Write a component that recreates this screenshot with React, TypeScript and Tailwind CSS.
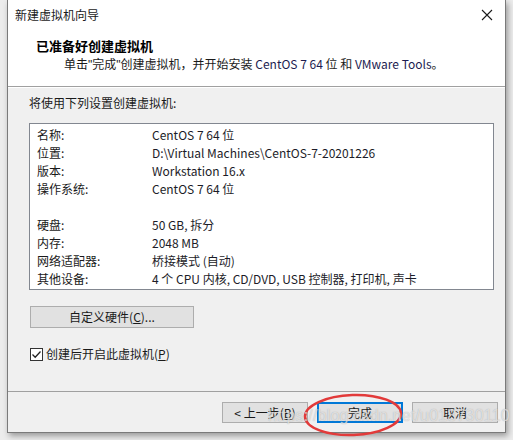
import React from 'react';

const rows: [string, string][] = [
  ['名称:', 'CentOS 7 64 位'],
  ['位置:', 'D:\\Virtual Machines\\CentOS-7-20201226'],
  ['版本:', 'Workstation 16.x'],
  ['操作系统:', 'CentOS 7 64 位'],
  ['', ''],
  ['硬盘:', '50 GB, 拆分'],
  ['内存:', '2048 MB'],
  ['网络适配器:', '桥接模式 (自动)'],
  ['其他设备:', '4 个 CPU 内核, CD/DVD, USB 控制器, 打印机, 声卡'],
];

const font = { fontFamily: '"Noto Sans CJK SC", "Noto Sans", sans-serif' };
const latin = { fontFamily: '"Liberation Sans", Arial, sans-serif' };

export default function App() {
  return (
    <div className="relative w-[513px] h-[440px] overflow-hidden bg-[#ececec] text-[12px] text-[#1a1a1a]" style={font}>
      <div className="ml-[7px] w-[499px] h-[433px] flex flex-col border border-t-0 border-[#7a7a7a] bg-[#f0f0f0] shadow-[2px_3px_6px_rgba(0,0,0,0.35)]">
        {/* title bar */}
        <div className="h-[30px] bg-white flex items-center justify-between pl-[7px] pr-[10px]">
          <span className="leading-none">新建虚拟机向导</span>
          <svg width="12" height="12" viewBox="0 0 12 12" className="mr-[2px]">
            <path d="M1 1L11 11M11 1L1 11" stroke="#1a1a1a" strokeWidth="1.1" />
          </svg>
        </div>

        {/* header */}
        <div className="bg-white pl-[28px] pt-[7px] pb-[13px] border-b border-[#a0a0a0]">
          <div className="h-[18px] leading-[18px] text-[13px] font-bold text-black">已准备好创建虚拟机</div>
          <div className="h-[18px] leading-[18px] pl-[28px]">
            单击<span style={latin}>"</span>完成<span style={latin}>"</span>创建虚拟机，并开始安装 <span className="text-[#1c1c50]">CentOS 7 64</span> 位 和 <span className="text-[#1c1c50]">VMware Tools</span>。
          </div>
        </div>

        {/* body */}
        <div className="flex-1 border-t border-white pl-[21px] pr-[12px] pt-[6px]">
          <div className="h-[18px] leading-[18px]">将使用下列设置创建虚拟机:</div>
          <div className="mt-[11px] w-[465px] h-[167px] border border-[#828790] bg-white pt-[2px] pl-[7px]">
            {rows.map(([k, v], i) => (
              <div key={i} className="flex h-[18px] leading-[18px]">
                <span className="w-[115px] shrink-0">{k}</span>
                <span className="text-[#1c1c28]">{v}</span>
              </div>
            ))}
          </div>
          <div className="mt-[16px] ml-[1px] w-[164px] h-[22px] border border-[#adadad] bg-[#e1e1e1] flex items-center justify-center leading-none">
            自定义硬件(<span className="underline">C</span>)...
          </div>
          <div className="mt-[18px] ml-[1px] flex items-center gap-[3px] h-[16px]">
            <span className="w-[13px] h-[13px] border border-[#333] bg-white flex items-center justify-center">
              <svg width="11" height="11" viewBox="0 0 11 11">
                <path d="M1.5 5.5L4.2 8.2L9.5 2.5" fill="none" stroke="#222" strokeWidth="1.3" />
              </svg>
            </span>
            <span className="leading-none">创建后开启此虚拟机(<span className="underline">P</span>)</span>
          </div>
        </div>

        {/* footer */}
        <div className="h-[41px] border-t border-[#a0a0a0] flex justify-end items-start gap-[9px] pt-[10px] pr-[7px]">
          <div className="w-[86px] h-[21px] border border-[#adadad] bg-[#e1e1e1] flex items-center justify-center leading-none">
            &lt; 上一步(<span className="underline">B</span>)
          </div>
          <div className="w-[86px] h-[21px] border-2 border-[#0078d7] bg-[#e1e1e1] flex items-center justify-center leading-none">
            完成
          </div>
          <div className="w-[86px] h-[21px] border border-[#adadad] bg-[#e1e1e1] flex items-center justify-center leading-none">
            取消
          </div>
        </div>
      </div>

      {/* red circle annotation */}
      <svg className="absolute left-[300px] top-[392px]" width="106" height="46" viewBox="0 0 106 46">
        <ellipse cx="53" cy="23" rx="48" ry="20" fill="none" stroke="#e23a3a" strokeWidth="2.5" transform="rotate(-2 53 23)" />
      </svg>

      {/* watermark */}
      <div
        className="absolute left-[268px] top-[406px] text-[16px] leading-[20px] text-white/60 tracking-[0.2px] pointer-events-none"
        style={{ ...latin, textShadow: '0 0 1px rgba(120,120,120,0.6)' }}
      >
        https://blog.csdn.net/u013730110
      </div>
    </div>
  );
}
